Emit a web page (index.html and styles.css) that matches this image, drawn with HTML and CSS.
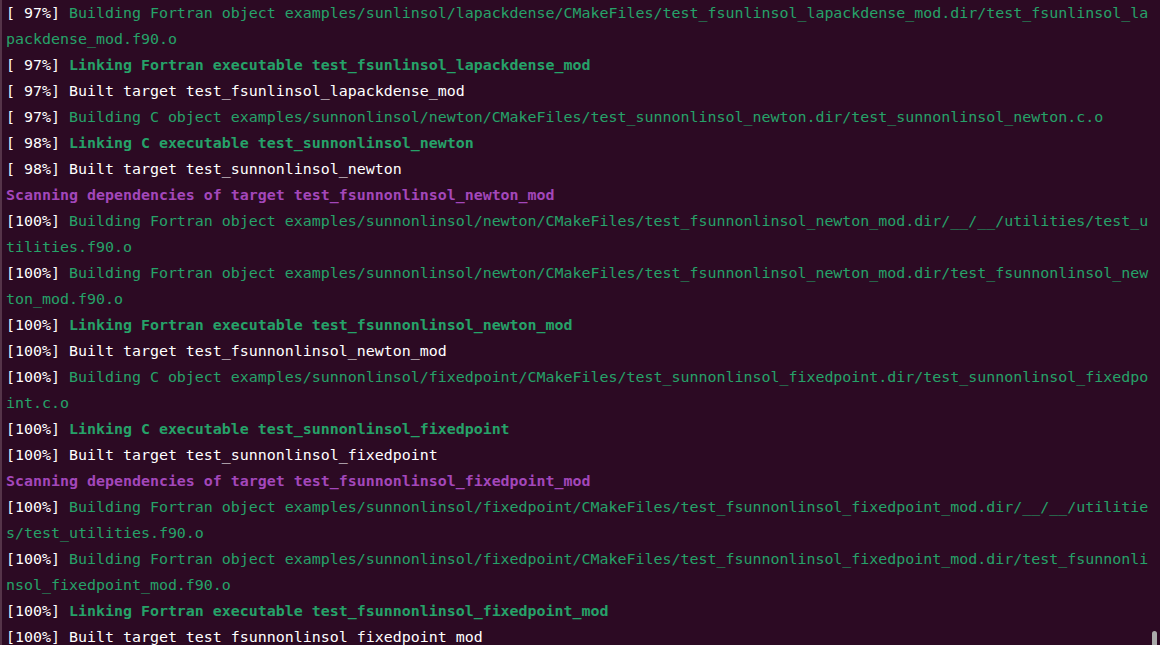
FILE: index.html
```html
<!DOCTYPE html>
<html>
<head>
<meta charset="utf-8">
<link rel="stylesheet" href="styles.css">
</head>
<body>
<div class="term">
  <div class="screen">
    <div class="row"><span class="w">[ 97%] </span><span class="g">Building Fortran object examples/sunlinsol/lapackdense/CMakeFiles/test_fsunlinsol_lapackdense_mod.dir/test_fsunlinsol_la</span></div>
    <div class="row"><span class="g">packdense_mod.f90.o</span></div>
    <div class="row"><span class="w">[ 97%] </span><span class="gb">Linking Fortran executable test_fsunlinsol_lapackdense_mod</span></div>
    <div class="row"><span class="w">[ 97%] Built target test_fsunlinsol_lapackdense_mod</span></div>
    <div class="row"><span class="w">[ 97%] </span><span class="g">Building C object examples/sunnonlinsol/newton/CMakeFiles/test_sunnonlinsol_newton.dir/test_sunnonlinsol_newton.c.o</span></div>
    <div class="row"><span class="w">[ 98%] </span><span class="gb">Linking C executable test_sunnonlinsol_newton</span></div>
    <div class="row"><span class="w">[ 98%] Built target test_sunnonlinsol_newton</span></div>
    <div class="row"><span class="pb">Scanning dependencies of target test_fsunnonlinsol_newton_mod</span></div>
    <div class="row"><span class="w">[100%] </span><span class="g">Building Fortran object examples/sunnonlinsol/newton/CMakeFiles/test_fsunnonlinsol_newton_mod.dir/__/__/utilities/test_u</span></div>
    <div class="row"><span class="g">tilities.f90.o</span></div>
    <div class="row"><span class="w">[100%] </span><span class="g">Building Fortran object examples/sunnonlinsol/newton/CMakeFiles/test_fsunnonlinsol_newton_mod.dir/test_fsunnonlinsol_new</span></div>
    <div class="row"><span class="g">ton_mod.f90.o</span></div>
    <div class="row"><span class="w">[100%] </span><span class="gb">Linking Fortran executable test_fsunnonlinsol_newton_mod</span></div>
    <div class="row"><span class="w">[100%] Built target test_fsunnonlinsol_newton_mod</span></div>
    <div class="row"><span class="w">[100%] </span><span class="g">Building C object examples/sunnonlinsol/fixedpoint/CMakeFiles/test_sunnonlinsol_fixedpoint.dir/test_sunnonlinsol_fixedpo</span></div>
    <div class="row"><span class="g">int.c.o</span></div>
    <div class="row"><span class="w">[100%] </span><span class="gb">Linking C executable test_sunnonlinsol_fixedpoint</span></div>
    <div class="row"><span class="w">[100%] Built target test_sunnonlinsol_fixedpoint</span></div>
    <div class="row"><span class="pb">Scanning dependencies of target test_fsunnonlinsol_fixedpoint_mod</span></div>
    <div class="row"><span class="w">[100%] </span><span class="g">Building Fortran object examples/sunnonlinsol/fixedpoint/CMakeFiles/test_fsunnonlinsol_fixedpoint_mod.dir/__/__/utilitie</span></div>
    <div class="row"><span class="g">s/test_utilities.f90.o</span></div>
    <div class="row"><span class="w">[100%] </span><span class="g">Building Fortran object examples/sunnonlinsol/fixedpoint/CMakeFiles/test_fsunnonlinsol_fixedpoint_mod.dir/test_fsunnonli</span></div>
    <div class="row"><span class="g">nsol_fixedpoint_mod.f90.o</span></div>
    <div class="row"><span class="w">[100%] </span><span class="gb">Linking Fortran executable test_fsunnonlinsol_fixedpoint_mod</span></div>
    <div class="row"><span class="w">[100%] Built target test_fsunnonlinsol_fixedpoint_mod</span></div>
  </div>
  <div class="scrollbar"></div>
</div>
</body>
</html>
```
FILE: styles.css
```css
html, body {
  margin: 0;
  padding: 0;
  background: #2c0a23;
  overflow: hidden;
}
.term {
  position: relative;
  width: 1160px;
  height: 645px;
  overflow: hidden;
  background: #2c0a23;
  border-left: 2px solid #553449;
  box-sizing: border-box;
}
.screen {
  padding-left: 4px;
  font-family: "DejaVu Sans Mono", "Liberation Mono", monospace;
  font-size: 14.95px;
  line-height: 26px;
}
.row {
  height: 26px;
  white-space: pre;
}
.w { color: #ffffff; }
.g { color: #26a269; }
.gb { color: #26a269; font-weight: bold; }
.pb { color: #a347ba; font-weight: bold; }
.scrollbar {
  position: absolute;
  right: 3px;
  top: 631px;
  width: 5px;
  height: 20px;
  border-radius: 3px 3px 0 0;
  background: #aaaaaa;
}
```
